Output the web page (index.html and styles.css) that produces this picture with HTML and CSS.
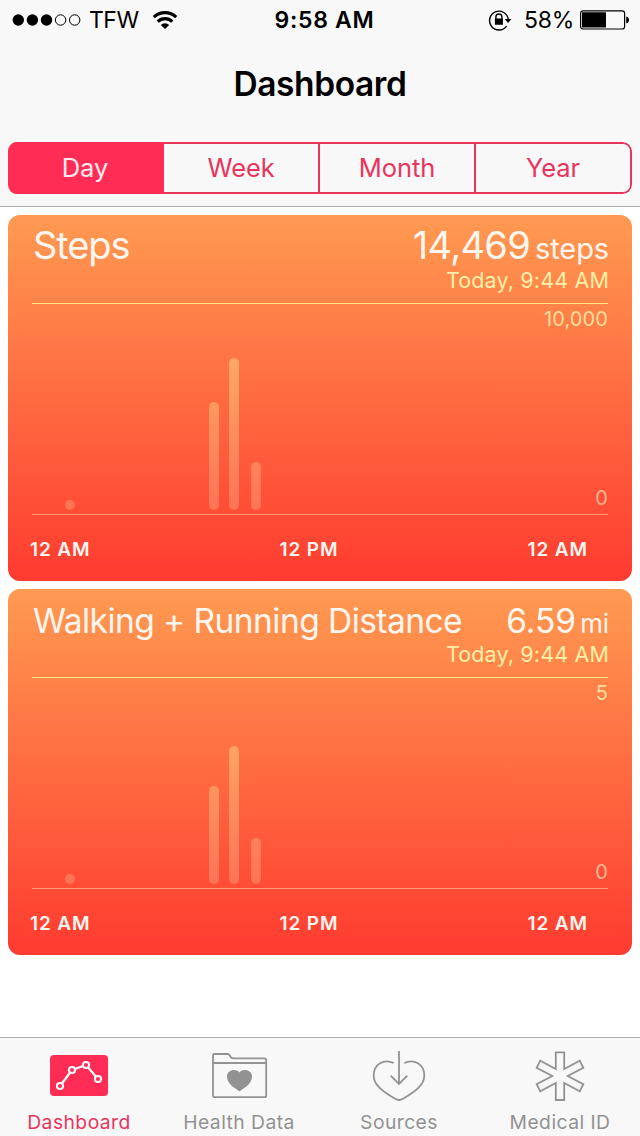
FILE: index.html
```
<!DOCTYPE html>
<html lang="en">

<head>
    <meta charset="utf-8">
    <title>Dashboard</title>
    <link rel="stylesheet" href="styles.css">
</head>

<body>
    <header class="header">
        <div class="status-bar">
            <div class="status-left">
                <svg class="signal" width="70" height="14" viewBox="0 0 70 14">
                    <circle cx="6.3" cy="7" r="5.7" />
                    <circle cx="20.4" cy="7" r="5.7" />
                    <circle cx="34.5" cy="7" r="5.7" />
                    <circle class="empty" cx="48.6" cy="7" r="5.2" />
                    <circle class="empty" cx="62.7" cy="7" r="5.2" />
                </svg>
                <span class="carrier">TFW</span>
                <svg class="wifi" width="26" height="20" viewBox="0 0 26 20">
                    <path d="M1.8 7.2a16 16 0 0 1 22.4 0" />
                    <path d="M5.7 11.6a10.4 10.4 0 0 1 14.6 0" />
                    <path class="fill" d="M8.8 14.9a6.3 6.3 0 0 1 8.4 0L13 19z" />
                </svg>
            </div>
            <div class="clock">9:58 AM</div>
            <div class="status-right">
                <svg class="lock" width="24" height="22" viewBox="0 0 24 22">
                    <path d="M18.6 17.1A9.4 9.4 0 1 1 20.3 10.5" />
                    <path d="M7.9 10V8a3 3 0 0 1 6 0v2" />
                    <path class="fill" d="M6.9 9.6h8v6.1h-8zM16.8 10h6.6l-3.3 3.9z" />
                </svg>
                <span class="percent">58%</span>
                <svg class="battery" width="50" height="20" viewBox="0 0 50 20">
                    <rect x="0.6" y="0.8" width="44" height="18.2" rx="2.5" />
                    <path class="fill" d="M2 2.3h24v15.2H2zM46.2 6.5q2.8 .6 2.8 3.4t-2.8 3.4z" />
                </svg>
            </div>
        </div>
        <h1 class="title">Dashboard</h1>
        <div class="segments">
            <button class="segment active">Day</button>
            <button class="segment">Week</button>
            <button class="segment">Month</button>
            <button class="segment">Year</button>
        </div>
    </header>

    <main class="cards">
        <section class="card steps">
            <div class="card-head">
                <h2 class="card-title">Steps</h2>
                <span class="value">14,469</span>
                <span class="unit">steps</span>
            </div>
            <div class="updated">Today, 9:44 AM</div>
            <div class="chart">
                <svg class="bars" width="576" height="210" viewBox="0 0 576 210">
                    <defs>
                        <linearGradient id="bar-fill" gradientUnits="userSpaceOnUse" x1="0" y1="54" x2="0" y2="206">
                            <stop offset="0" stop-color="#ffa866" />
                            <stop offset="1" stop-color="#ff7355" />
                        </linearGradient>
                    </defs>
                    <rect x="33" y="196" width="10" height="10" rx="5" />
                    <rect x="177" y="98" width="10" height="108" rx="5" />
                    <rect x="197" y="54" width="10" height="152" rx="5" />
                    <rect x="219" y="158" width="10" height="48" rx="5" />
                </svg>
                <div class="scale">
                    <span class="scale-max">10,000</span>
                    <span class="scale-min">0</span>
                </div>
            </div>
            <div class="hours">
                <span>12 AM</span>
                <span>12 PM</span>
                <span>12 AM</span>
            </div>
        </section>

        <section class="card distance">
            <div class="card-head">
                <h2 class="card-title">Walking + Running Distance</h2>
                <span class="value">6.59</span>
                <span class="unit">mi</span>
            </div>
            <div class="updated">Today, 9:44 AM</div>
            <div class="chart">
                <svg class="bars" width="576" height="210" viewBox="0 0 576 210">
                    <rect x="33" y="196" width="10" height="10" rx="5" />
                    <rect x="177" y="108" width="10" height="98" rx="5" />
                    <rect x="197" y="68" width="10" height="138" rx="5" />
                    <rect x="219" y="160" width="10" height="46" rx="5" />
                </svg>
                <div class="scale">
                    <span class="scale-max">5</span>
                    <span class="scale-min">0</span>
                </div>
            </div>
            <div class="hours">
                <span>12 AM</span>
                <span>12 PM</span>
                <span>12 AM</span>
            </div>
        </section>
    </main>

    <nav class="tab-bar">
        <a class="tab active">
            <svg width="62" height="56" viewBox="0 0 62 56">
                <rect class="plate" x="2" y="7" width="58" height="41" rx="4" />
                <path class="line" d="M12 38L24 22L38 17L50 31" />
                <circle class="node" cx="12" cy="38" r="3.1" />
                <circle class="node" cx="24" cy="22" r="3.1" />
                <circle class="node" cx="38" cy="17" r="3.1" />
                <circle class="node" cx="50" cy="31" r="3.1" />
            </svg>
            <span>Dashboard</span>
        </a>
        <a class="tab">
            <svg width="62" height="56" viewBox="0 0 62 56">
                <path d="M5 47.5V7.5Q5 6 6.5 6H19.5Q21 6 21.8 7.5L22.7 9Q23.4 10.3 25 10.3H56.5Q58.2 10.3 58.2 12V47.5Q58.2 49.2 56.5 49.2H6.7Q5 49.2 5 47.5ZM5 15H58.2" />
                <path class="fill" d="M31.5 43.5C28 40.5 19 36.5 19 28.5C19 22.2 27.5 20 31.5 24.4C35.5 20 44 22.2 44 28.5C44 36.5 35 40.5 31.5 43.5Z" />
            </svg>
            <span>Health Data</span>
        </a>
        <a class="tab">
            <svg width="62" height="56" viewBox="0 0 62 56">
                <path d="M25.7 15C16 10.5 5.7 16 5.7 27.5C5.7 37 14.5 43.5 27 50.8Q31 53.2 35 50.8C47.5 43.5 56.3 37 56.3 27.5C56.3 16 46 10.5 36.3 15" />
                <path d="M31 3V36M22.7 27.7L31 36L39.3 27.7" />
            </svg>
            <span>Sources</span>
        </a>
        <a class="tab">
            <svg width="62" height="56" viewBox="0 0 62 56">
                <path d="M26.8 4.3H35.2V21L50.8 12.7L54.3 19.8L38.7 28L54.3 36.2L50.8 43.3L35.2 35V52H26.8V35L11.2 43.3L7.7 36.2L23.3 28L7.7 19.8L11.2 12.7L26.8 21Z" />
            </svg>
            <span>Medical ID</span>
        </a>
    </nav>
</body>

</html>
```
FILE: styles.css
```
* {
    box-sizing: border-box;
}

body {
    display: flex;
    flex-direction: column;
    height: 1136px;
    margin: 0;
    overflow: hidden;
    background-color: #ffffff;
    font-family: Inter, "Liberation Sans", sans-serif;
}

svg {
    display: block;
    flex: none;
}

.header {
    height: 207px;
    padding: 0 8px;
    background-color: #f8f8f8;
    border-bottom: 1px solid #acacac;
}

.status-bar {
    display: grid;
    grid-template-columns: 1fr auto 1fr;
    height: 40px;
    line-height: 41px;
    font-size: 23px;
}

.status-left,
.status-right {
    display: flex;
    align-items: center;
    height: 40px;
}

.status-left {
    padding-left: 4px;
}

.status-right {
    justify-content: flex-end;
    padding-right: 2px;
}

.carrier {
    margin-left: 7px;
    letter-spacing: -0.5px;
}

.wifi {
    margin-left: 13px;
    fill: none;
    stroke: #000000;
    stroke-width: 3.1;
}

.wifi .fill,
.lock .fill,
.battery .fill {
    fill: #000000;
    stroke: none;
}

.signal .empty {
    fill: none;
    stroke: #000000;
}

.clock {
    padding-left: 9px;
    font-weight: 600;
    letter-spacing: 0.7px;
}

.lock {
    margin-right: 12px;
    fill: none;
    stroke: #000000;
    stroke-width: 1.4;
}

.percent {
    letter-spacing: -0.3px;
}

.battery {
    margin-left: 6px;
    fill: none;
    stroke: #000000;
    stroke-width: 1.2;
}

.title {
    margin: 0;
    line-height: 88px;
    font-size: 33.5px;
    font-weight: 600;
    letter-spacing: -0.4px;
    text-align: center;
}

.segments {
    display: grid;
    grid-template-columns: repeat(4, 1fr);
    height: 52px;
    margin-top: 14px;
    border-radius: 9px;
    overflow: hidden;
}

.segment {
    padding: 0 0 2px;
    background: none;
    border: 2px solid #e8355d;
    border-left: none;
    color: #e8355d;
    font-family: inherit;
    font-size: 25.5px;
    letter-spacing: -0.1px;
}

.segment:last-child {
    border-radius: 0 9px 9px 0;
}

.segment.active {
    border-color: #ff2d55;
    background-color: #ff2d55;
    color: #ffeaf0;
}

.cards {
    display: flex;
    flex: 1;
    flex-direction: column;
    gap: 8px;
    padding: 8px;
}

.card {
    height: 366px;
    padding: 0 24px;
    border-radius: 12px;
    background: linear-gradient(#ff9a51, #ff3b30);
    color: #fff7ef;
}

.card-head {
    display: flex;
    align-items: baseline;
    height: 52px;
    margin-right: -1px;
    line-height: 1;
}

/* puts the text baseline 44px below the card's top edge */
.card-head::before {
    content: "";
    height: 44px;
}

.card-title {
    flex: 1;
    margin: 0;
    padding-left: 1px;
    font-size: 38px;
    font-weight: 400;
    letter-spacing: -1.1px;
    white-space: nowrap;
}

.value {
    font-size: 38px;
    letter-spacing: -0.7px;
}

.unit {
    margin-left: 5px;
    font-size: 29px;
    letter-spacing: -0.1px;
}

.distance .card-title {
    font-size: 33.5px;
    letter-spacing: -0.55px;
}

.distance .value {
    font-size: 33.5px;
    letter-spacing: 0;
}

.distance .unit {
    margin-left: 4px;
    font-size: 26px;
}

.updated {
    height: 36px;
    margin-right: -1px;
    line-height: 26px;
    color: #ffefa8;
    font-size: 21.5px;
    letter-spacing: 0.15px;
    text-align: right;
}

.chart {
    display: grid;
    height: 212px;
    border-top: 1px solid #ffe683;
    border-bottom: 1px solid #ff9a76;
}

.bars,
.scale {
    grid-area: 1 / 1;
}

.bars {
    fill: url(#bar-fill);
}

.scale {
    display: flex;
    flex-direction: column;
    justify-content: space-between;
    align-items: flex-end;
    padding: 3px 0 4px;
    line-height: 24px;
    font-size: 20px;
    letter-spacing: 0.1px;
}

.scale-max {
    color: #ffdd9c;
}

.scale-min {
    color: #ffb391;
}

.hours {
    display: flex;
    justify-content: space-between;
    padding: 23px 20px 0 0;
    margin-left: -2px;
    line-height: 24px;
    font-size: 19px;
    font-weight: 600;
    letter-spacing: 0.9px;
}

.tab-bar {
    display: grid;
    grid-template-columns: 158px 162px 158px 1fr;
    height: 99px;
    border-top: 1px solid #acacac;
    background-color: #f8f8f8;
}

.tab {
    display: flex;
    flex-direction: column;
    align-items: center;
    padding-top: 10px;
    color: #929292;
    font-size: 19.3px;
    letter-spacing: 0.45px;
}

.tab:last-child {
    padding-left: 2px;
}

.tab svg {
    margin-bottom: 6px;
    fill: none;
    stroke: #929292;
    stroke-width: 1.8;
}

.tab span {
    line-height: 24px;
}

.tab svg .fill {
    fill: #929292;
    stroke: none;
}

.tab.active {
    color: #e8355d;
}

.tab svg .plate {
    fill: #ff2d55;
    stroke: none;
}

.tab svg .line {
    stroke: #ffffff;
    stroke-width: 2.2;
}

.tab svg .node {
    fill: #ff2d55;
    stroke: #ffffff;
    stroke-width: 2;
}
```
